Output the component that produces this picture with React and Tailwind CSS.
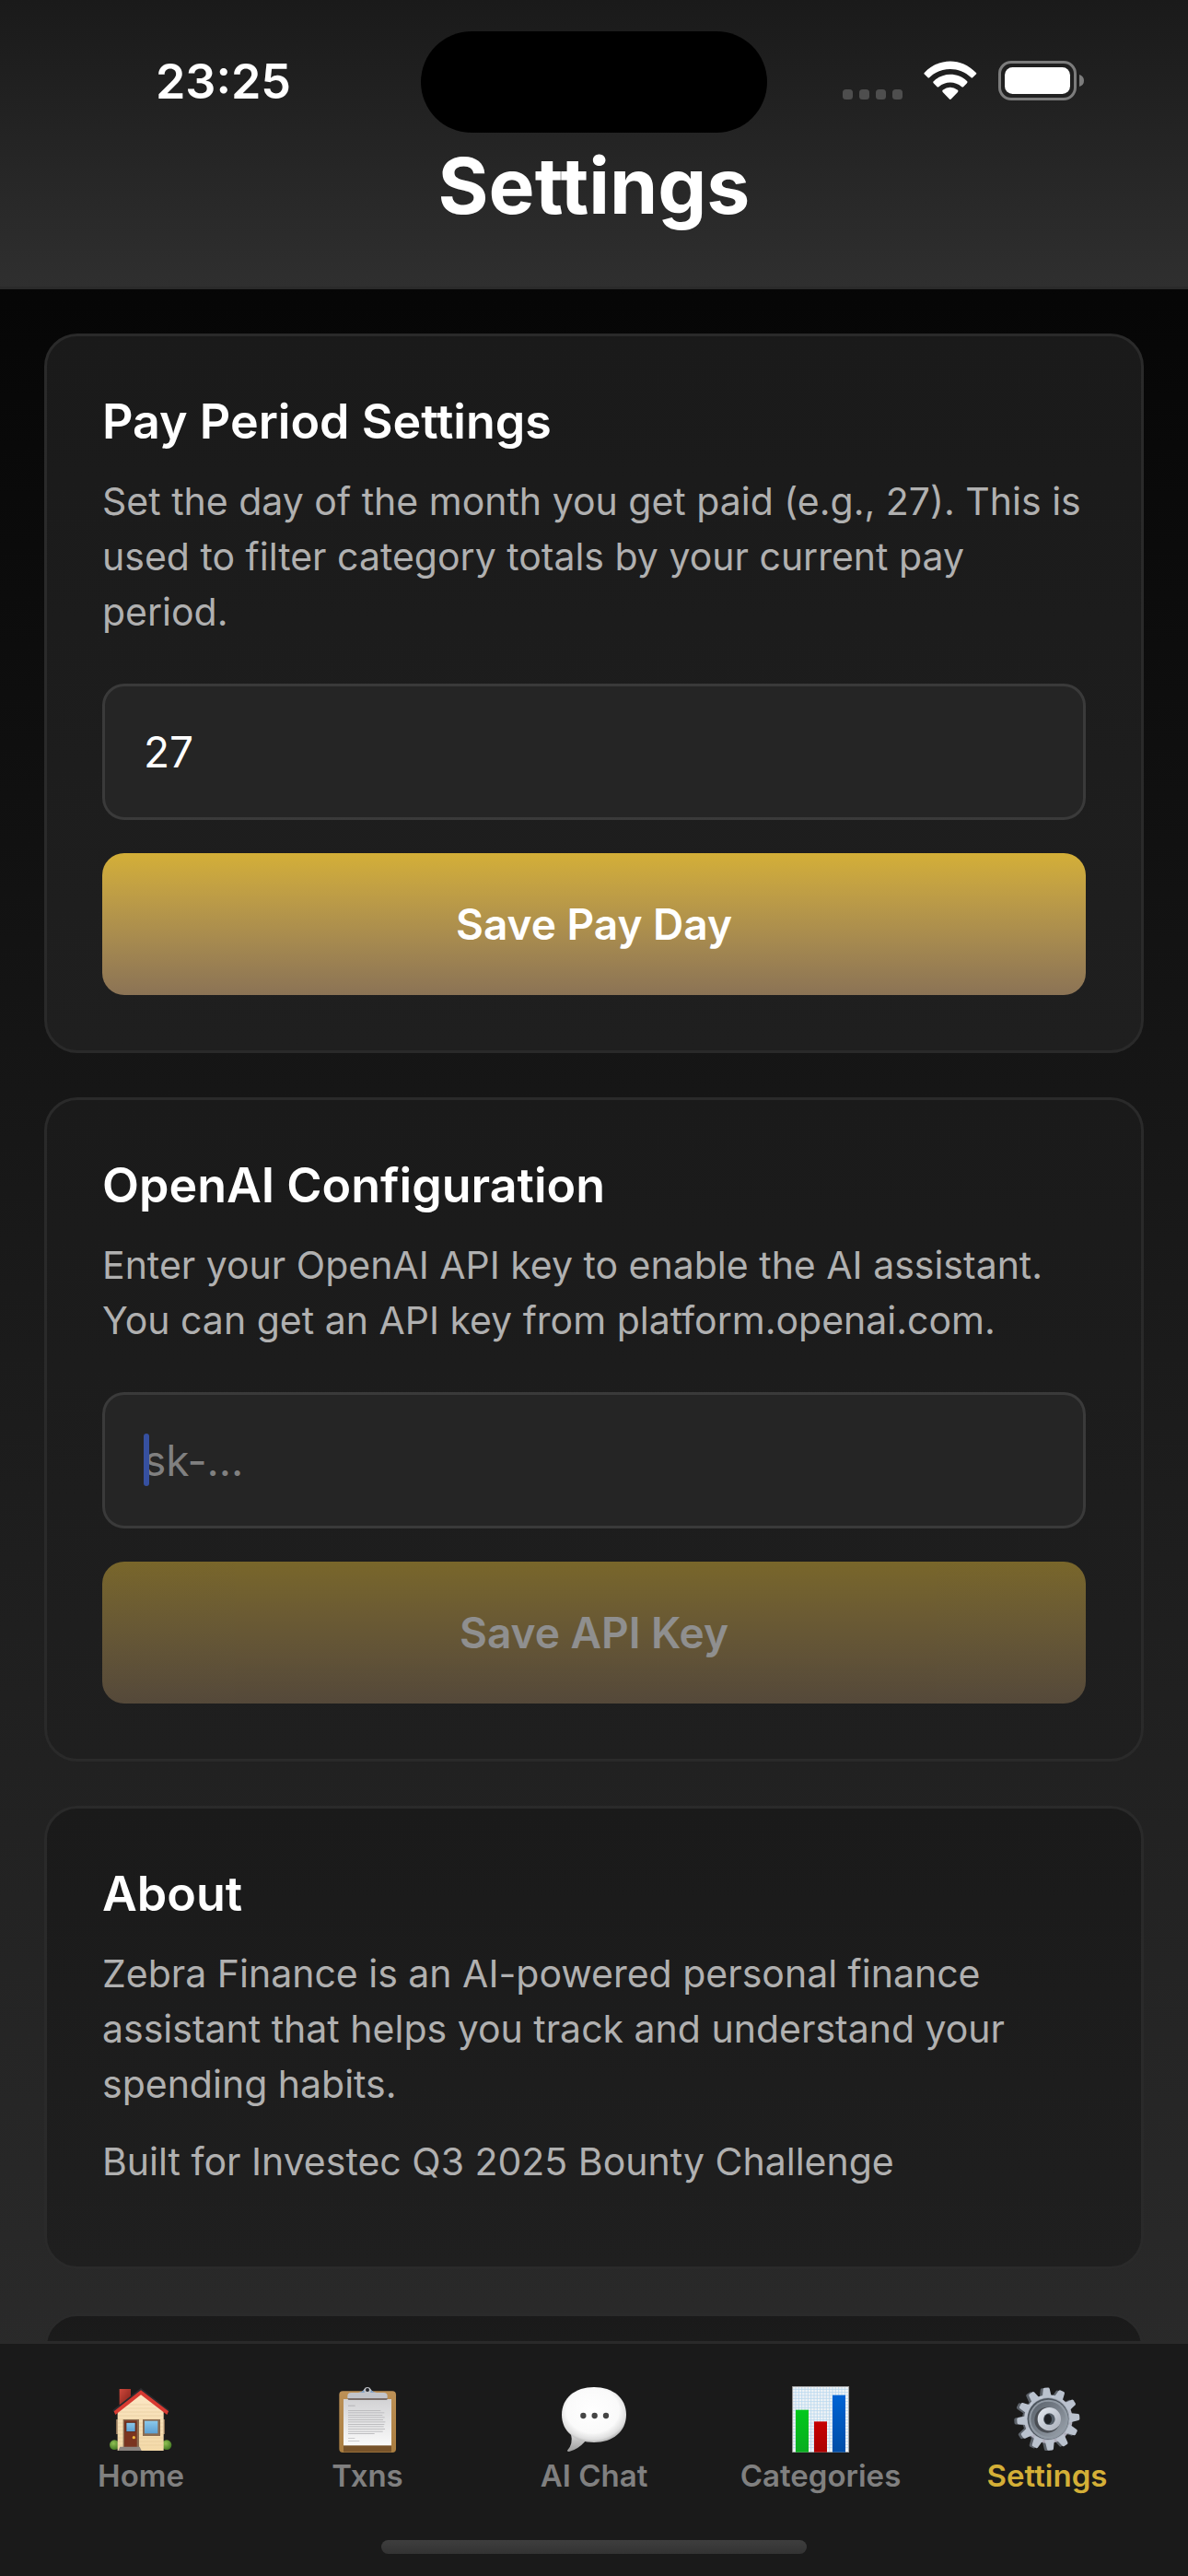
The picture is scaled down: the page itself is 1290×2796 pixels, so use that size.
import React, { useState } from "react";

function CellularDots() {
  return (
    <svg width="65" height="43" viewBox="0 0 65 43" aria-hidden="true">
      {[0, 18, 36, 54].map((x) => (
        <rect key={x} x={x} y="31" width="11" height="11" rx="3.5" fill="#4e4e4e" />
      ))}
    </svg>
  );
}

function WifiIcon() {
  return (
    <svg width="58" height="43" viewBox="371 75 174 129" fill="#fff" aria-hidden="true">
      <path d="M374 113 C421 64 494 64 541 113 Q545 116 541 119 L531 129 Q528 132 525 129 C487 93 428 93 390 129 Q387 132 384 129 L374 119 Q370 116 374 113 Z" />
      <path d="M404 141 C434 112 482 112 512 141 Q515 144 512 148 L501 159 Q498 162 494 159 C474 141 441 141 421 159 Q417 162 414 159 L403 148 Q400 144 404 141 Z" />
      <path d="M433 170 Q457 153 482 170 Q485 173 482 177 L461 199 Q457 203 454 199 L433 177 Q430 173 433 170 Z" />
    </svg>
  );
}

function BatteryIcon() {
  return (
    <svg width="93" height="43" viewBox="0 0 93 43" aria-hidden="true">
      <rect x="1.5" y="1.5" width="82" height="40" rx="12.5" fill="none" stroke="#7c7c7c" strokeWidth="3" />
      <rect x="7" y="7" width="71" height="29" rx="8.5" fill="#fff" />
      <path d="M88 15 Q93 16.500 93 21.500 Q93 26.500 88 28 Z" fill="#7c7c7c" />
    </svg>
  );
}

function HomeIcon() {
  return (
    <svg className="size-[72px]" viewBox="82 60 216 216" aria-hidden="true">
      <defs>
        <linearGradient id="wall" x1="0" y1="0" x2="0" y2="1">
          <stop offset="0" stopColor="#fbe6c4" />
          <stop offset="1" stopColor="#f3d9a8" />
        </linearGradient>
        <linearGradient id="glass" x1="0" y1="0" x2="0" y2="1">
          <stop offset="0" stopColor="#8cc9ea" />
          <stop offset="1" stopColor="#5b9fd2" />
        </linearGradient>
        <linearGradient id="chimney" x1="0" y1="0" x2="1" y2="1">
          <stop offset="0" stopColor="#d0493c" />
          <stop offset="1" stopColor="#7e1f18" />
        </linearGradient>
        <radialGradient id="bush" cx="0.400" cy="0.350" r="0.700">
          <stop offset="0" stopColor="#8fc053" />
          <stop offset="1" stopColor="#3f7420" />
        </radialGradient>
      </defs>
      <rect x="120" y="69" width="37" height="52" fill="url(#chimney)" />
      <rect x="109" y="168" width="8" height="48" fill="#8d7256" />
      <rect x="260" y="168" width="8" height="48" fill="#8d7256" />
      <circle cx="104" cy="251" r="16" fill="url(#bush)" />
      <circle cx="274" cy="251" r="16" fill="url(#bush)" />
      <path d="M114 140 L190 82 L264 140 V270 H114 Z" fill="url(#wall)" />
      {[120, 132, 144, 156, 168, 180, 192, 204, 216, 228, 240, 252].map((y) => (
        <path key={y} d={`M${y < 138 ? 138 : 115} ${y} H${y < 138 ? 241 : 263}`} stroke="#e2c596" strokeWidth="1.500" />
      ))}
      <path d="M98 138 L190 66 L282 138 L278 144 L190 75 L102 144 Z" fill="#2b2b2e" />
      <path d="M102 142 L190 73 L280 142 L275 153 L190 88 L107 153 Z" fill="#d83a31" />
      <rect x="132" y="168" width="52" height="91" fill="#8a6b50" />
      <rect x="136" y="172" width="41" height="87" fill="#7a3420" />
      <rect x="142" y="178" width="30" height="30" fill="url(#glass)" stroke="#57210f" strokeWidth="2" />
      <circle cx="167" cy="227" r="5" fill="#f0b53c" />
      <rect x="196" y="168" width="57" height="54" fill="#8a6b50" />
      <rect x="202" y="173" width="43" height="41" fill="url(#glass)" />
      <path d="M122 257 H186 L192 270 H116 Z" fill="#8c8581" />
    </svg>
  );
}

function ClipboardIcon() {
  return (
    <svg className="size-[72px]" viewBox="819 60 216 216" aria-hidden="true">
      <defs>
        <linearGradient id="paper" x1="0" y1="0" x2="0" y2="1">
          <stop offset="0" stopColor="#d2d2d4" />
          <stop offset="1" stopColor="#fafafa" />
        </linearGradient>
        <linearGradient id="board" x1="0" y1="0" x2="0" y2="1">
          <stop offset="0" stopColor="#bd9156" />
          <stop offset="1" stopColor="#a97d40" />
        </linearGradient>
      </defs>
      <rect x="835" y="76" width="185" height="200" rx="12" fill="url(#board)" />
      <rect x="849" y="252" width="156" height="22" fill="#77532a" />
      <rect x="849" y="102" width="156" height="151" fill="url(#paper)" />
      <rect x="864" y="122" width="23" height="3" fill="#b4b4b6" />
      {[
        [138, 106],
        [145, 118],
        [153, 112],
        [160, 119],
        [168, 114],
        [175, 121],
        [183, 118],
        [190, 116],
        [198, 120],
        [206, 113],
        [213, 86],
      ].map(([y, w]) => (
        <rect key={y} x="864" y={y} width={w} height="3" fill="#bebec0" />
      ))}
      <rect x="864" y="228" width="22" height="3" fill="#cdcdcf" />
      <rect x="864" y="237" width="37" height="3" fill="#cdcdcf" />
      <rect x="863" y="94" width="129" height="11" rx="4" fill="#7b706c" />
      <path d="M862 99 V92 Q862 81 874 81 H897 Q912 80 916 70 A12 12 0 0 1 938 70 Q942 80 957 81 H980 Q992 81 992 92 V99 Z" fill="#c3c5ca" />
      <path d="M900 80 Q911 78 915 73 L918 80 Z M954 80 Q943 78 939 73 L936 80 Z" fill="#7a9cc4" />
      <circle cx="927" cy="72" r="6" fill="#23262b" />
    </svg>
  );
}

function ChatIcon() {
  return (
    <svg className="size-[72px]" viewBox="57 60 216 216" aria-hidden="true">
      <defs>
        <radialGradient id="bubble" cx="0.480" cy="0.420" r="0.600">
          <stop offset="0" stopColor="#ffffff" />
          <stop offset="0.680" stopColor="#fafafa" />
          <stop offset="0.880" stopColor="#dedede" />
          <stop offset="1" stopColor="#a8a8a8" />
        </radialGradient>
        <linearGradient id="tail" x1="0" y1="0" x2="0" y2="1">
          <stop offset="0" stopColor="#dcdcdc" />
          <stop offset="1" stopColor="#9c9c9c" />
        </linearGradient>
      </defs>
      <path d="M90 215 Q98 248 78 269 Q77 273 84 273 Q112 267 138 238 Z" fill="url(#tail)" />
      <path d="M165 63 C226 63 270 98 270 153 C270 208 226 243 165 243 C104 243 60 208 60 153 C60 98 104 63 165 63 Z" fill="url(#bubble)" />
      <circle cx="130" cy="156" r="9.500" fill="#454545" />
      <circle cx="167" cy="156" r="9.500" fill="#454545" />
      <circle cx="204" cy="156" r="9.500" fill="#454545" />
    </svg>
  );
}

function ChartIcon() {
  const lines = [...Array(17).keys()];
  return (
    <svg className="size-[72px]" viewBox="795 60 216 216" aria-hidden="true">
      <defs>
        <linearGradient id="bar-green" x1="0" y1="0" x2="0" y2="1">
          <stop offset="0" stopColor="#00c81c" />
          <stop offset="1" stopColor="#0aad20" />
        </linearGradient>
        <linearGradient id="bar-red" x1="0" y1="0" x2="0" y2="1">
          <stop offset="0" stopColor="#c60000" />
          <stop offset="1" stopColor="#ab0000" />
        </linearGradient>
        <linearGradient id="bar-blue" x1="0" y1="0" x2="0" y2="1">
          <stop offset="0" stopColor="#0063d4" />
          <stop offset="1" stopColor="#004da6" />
        </linearGradient>
      </defs>
      <rect x="812" y="61" width="183" height="214" fill="#f1f4f6" />
      {lines.map((i) => (
        <path key={`v${i}`} d={`M${822 + i * 10} 62 V274`} stroke="#b9d8ee" strokeWidth="2.500" />
      ))}
      {lines.concat([17, 18, 19]).map((i) => (
        <path key={`h${i}`} d={`M813 ${70 + i * 10} H994`} stroke="#b9d8ee" strokeWidth="2.500" />
      ))}
      <rect x="812" y="61" width="183" height="214" fill="none" stroke="#a2a2a2" strokeWidth="2.500" />
      <rect x="822" y="137" width="42" height="138" fill="url(#bar-green)" />
      <rect x="882" y="175" width="42" height="100" fill="url(#bar-red)" />
      <rect x="942" y="89" width="42" height="186" fill="url(#bar-blue)" />
    </svg>
  );
}

function GearIcon() {
  const teeth = [...Array(12).keys()];
  const tooth = "M-15 -68 L-10 -98 Q-9 -102 -5 -102 H6 Q10 -102 11 -98 L16 -68 Z";
  return (
    <svg className="size-[72px]" viewBox="184 60 216 216" aria-hidden="true">
      <defs>
        <linearGradient id="metal" x1="0" y1="0" x2="0.400" y2="1">
          <stop offset="0" stopColor="#c6d0dc" />
          <stop offset="1" stopColor="#adabb9" />
        </linearGradient>
        <linearGradient id="groove" x1="0" y1="0" x2="1" y2="1">
          <stop offset="0" stopColor="#59616a" />
          <stop offset="1" stopColor="#9aa2ac" />
        </linearGradient>
        <linearGradient id="hub" x1="0" y1="0" x2="1" y2="1">
          <stop offset="0" stopColor="#e6ecf3" />
          <stop offset="1" stopColor="#a7acb8" />
        </linearGradient>
      </defs>
      <g transform="translate(287 168)" fill="#5c626a">
        <circle r="76" />
        {teeth.map((i) => (
          <path key={i} d={tooth} transform={`rotate(${i * 30 - 4})`} />
        ))}
      </g>
      <g transform="translate(296 167)" fill="#bac2ce">
        <circle r="79" fill="url(#metal)" />
        {teeth.map((i) => (
          <path key={i} d={tooth} transform={`rotate(${i * 30 - 4})`} />
        ))}
      </g>
      <circle cx="296" cy="166" r="69" fill="#9ba4af" />
      <circle cx="295" cy="166" r="67" fill="#4e565f" />
      <circle cx="297" cy="168" r="64" fill="#9099a3" />
      <circle cx="296" cy="167" r="57" fill="url(#groove)" />
      <circle cx="293" cy="170" r="42" fill="#4a4e54" />
      <circle cx="299" cy="167" r="38" fill="url(#hub)" />
      <circle cx="299" cy="167" r="19" fill="#545d67" />
      <ellipse cx="295" cy="167" rx="12" ry="16" fill="#1f2226" />
    </svg>
  );
}

const tabs = [
  { label: "Home", Icon: HomeIcon },
  { label: "Txns", Icon: ClipboardIcon },
  { label: "AI Chat", Icon: ChatIcon },
  { label: "Categories", Icon: ChartIcon },
  { label: "Settings", Icon: GearIcon, active: true },
];

function Card({ title, children }) {
  return (
    <section className="shrink-0 rounded-[36px] border-[3px] border-[#2a2a2a] bg-linear-to-b from-[#1a1a1a] to-[#1f1f1f] p-[60px]">
      {title && <h2 className="mb-[23px] text-[52px] leading-[66px] font-semibold text-white">{title}</h2>}
      {children}
    </section>
  );
}

function Copy({ children }) {
  return <p className="text-[41px] leading-[60px] text-[#b0b0b0]">{children}</p>;
}

function SaveButton({ children, disabled }) {
  return (
    <button
      type="button"
      disabled={disabled}
      className="mt-9 block h-[154px] w-full rounded-[24px] bg-linear-to-b from-[#d4af37] to-[#8b7355] text-[46px] font-semibold text-white disabled:opacity-50"
    >
      {children}
    </button>
  );
}

const fieldClass =
  "block h-[148px] w-full rounded-[24px] border-[3px] border-[#3a3a3a] bg-[#252525] px-[42px] text-[46px] text-white outline-none placeholder:text-[#808080] placeholder:opacity-100";

export default function App() {
  const [payDay, setPayDay] = useState("27");
  const [apiKey, setApiKey] = useState("");

  return (
    <div className="flex h-screen flex-col bg-linear-to-b/srgb from-black via-[#1a1a1a] to-[#2d2d2d] font-['Inter',sans-serif]">
      <header className="shrink-0 border-b-[3px] border-[#2a2a2a] bg-linear-to-b from-[#1a1a1a] to-[#2f2f2f] pt-[34px] pb-[59px]">
        <div className="grid grid-cols-[1fr_376px_1fr] items-center">
          <div className="pl-7 text-center text-[52px] leading-[64px] font-semibold text-white">23:25</div>
          <div className="h-[110px] rounded-full bg-black" />
          <div className="mb-1 flex items-end justify-center gap-[23px] pr-8">
            <CellularDots />
            <WifiIcon />
            <BatteryIcon />
          </div>
        </div>
        <h1 className="mt-2 text-center text-[84px] leading-[100px] font-bold text-white">Settings</h1>
      </header>

      <main className="flex min-h-0 flex-1 flex-col gap-12 overflow-y-auto p-12 [scrollbar-width:none]">
        <Card title={<label htmlFor="pay-day">Pay Period Settings</label>}>
          <Copy>
            Set the day of the month you get paid (e.g., 27). This is used to filter category totals by your current pay
            period.
          </Copy>
          <input
            id="pay-day"
            inputMode="numeric"
            value={payDay}
            onChange={(e) => setPayDay(e.target.value)}
            className={`mt-12 ${fieldClass}`}
          />
          <SaveButton>Save Pay Day</SaveButton>
        </Card>

        <Card title={<label htmlFor="api-key">OpenAI Configuration</label>}>
          <Copy>
            Enter your OpenAI API key to enable the AI assistant. You can get an API key from platform.openai.com.
          </Copy>
          <div className="relative mt-12">
            <input
              id="api-key"
              placeholder="sk-..."
              value={apiKey}
              onChange={(e) => setApiKey(e.target.value)}
              className={fieldClass}
            />
            <span className="absolute top-[45px] left-[45px] h-[57px] w-[6px] rounded-full bg-[#3650a0]" />
          </div>
          <SaveButton disabled={!apiKey}>Save API Key</SaveButton>
        </Card>

        <Card title="About">
          <div className="flex flex-col gap-6 pb-6">
            <Copy>
              Zebra Finance is an AI-powered personal finance assistant that helps you track and understand your
              spending habits.
            </Copy>
            <Copy>Built for Investec Q3 2025 Bounty Challenge</Copy>
          </div>
        </Card>

        <Card />
      </main>

      <nav className="shrink-0 border-t-[3px] border-[#2a2a2a] bg-[#1a1a1a] px-[30px] pt-[46px] pb-6">
        <div className="grid grid-cols-5">
          {tabs.map(({ label, Icon, active }) => (
            <a key={label} href="#" aria-current={active ? "page" : undefined} className="flex flex-col items-center gap-[5px]">
              <Icon />
              <span
                className={
                  active
                    ? "text-[33px] leading-10 font-semibold text-[#d4af37]"
                    : "text-[33px] leading-10 font-semibold text-[#808080]"
                }
              >
                {label}
              </span>
            </a>
          ))}
        </div>
        <div className="mx-auto mt-[50px] h-[15px] w-[462px] rounded-full bg-linear-to-b from-[#3e3e3e] to-[#333333]" />
      </nav>
    </div>
  );
}
